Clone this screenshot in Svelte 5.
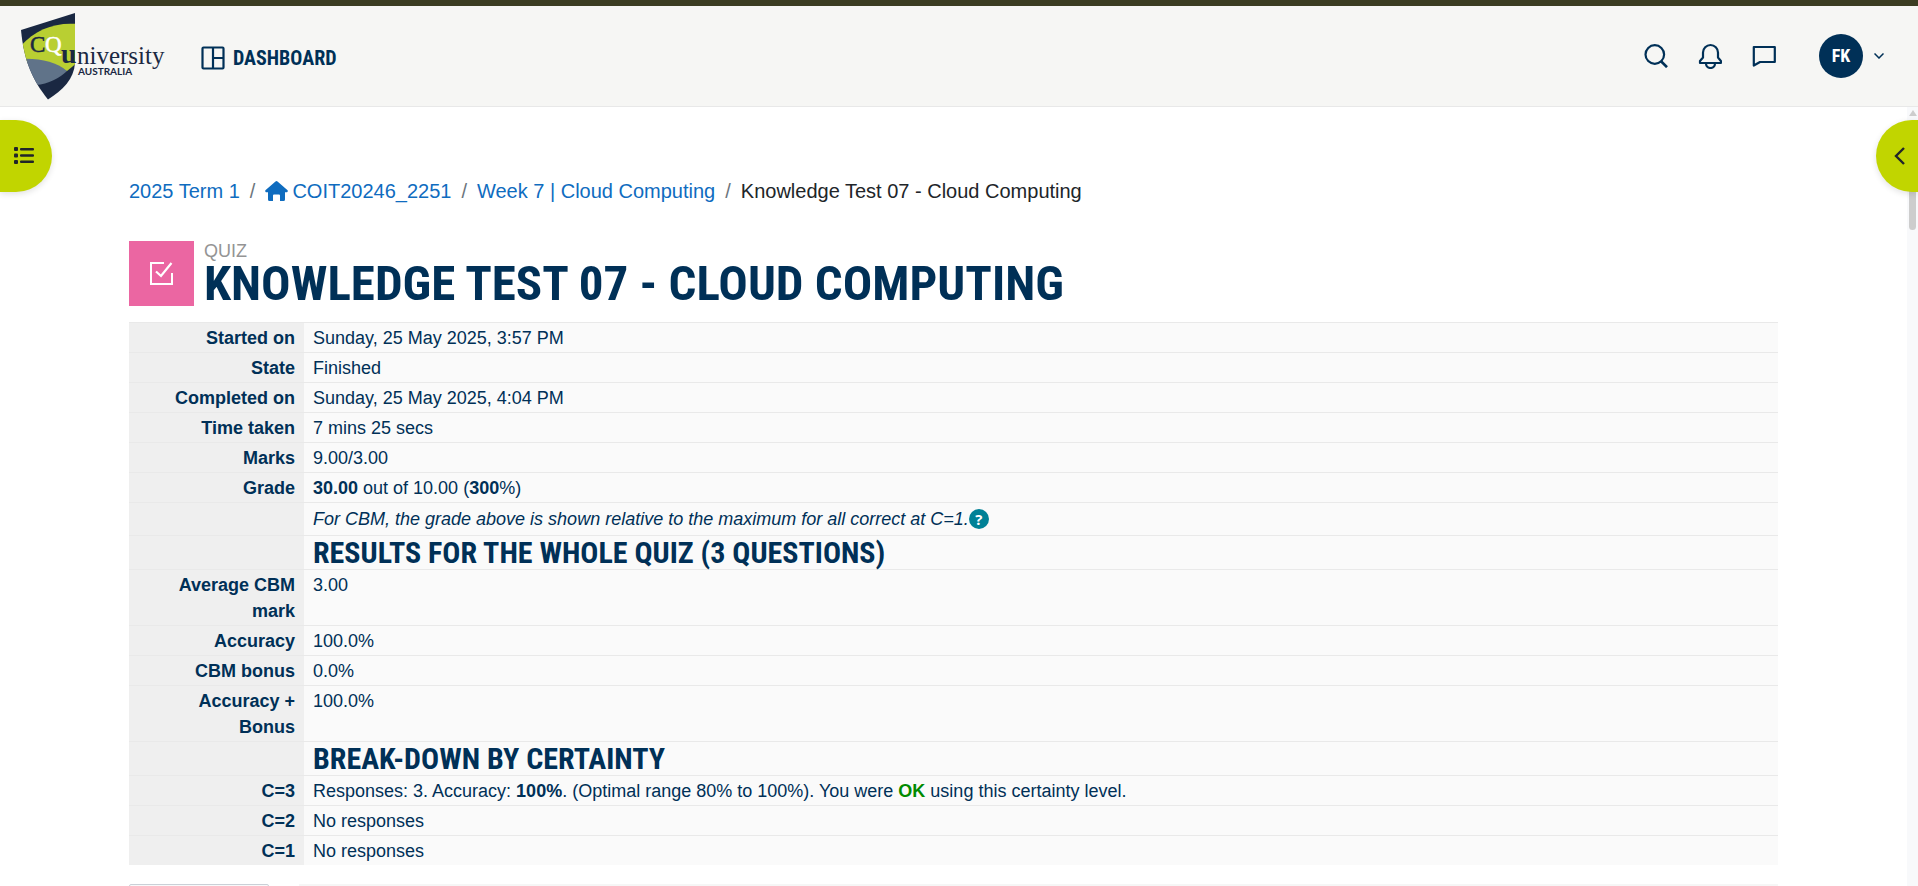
<script>
  const crumbs = [
    { label: '2025 Term 1' },
    { label: 'COIT20246_2251', home: true },
    { label: 'Week 7 | Cloud Computing' },
  ];

  const rows = [
    { label: 'Started on', parts: [{ t: 'Sunday, 25 May 2025, 3:57 PM' }] },
    { label: 'State', parts: [{ t: 'Finished' }] },
    { label: 'Completed on', parts: [{ t: 'Sunday, 25 May 2025, 4:04 PM' }] },
    { label: 'Time taken', parts: [{ t: '7 mins 25 secs' }] },
    { label: 'Marks', parts: [{ t: '9.00/3.00' }] },
    { label: 'Grade', parts: [{ t: '30.00', b: true }, { t: ' out of 10.00 (' }, { t: '300', b: true }, { t: '%)' }] },
    { label: '', note: 'For CBM, the grade above is shown relative to the maximum for all correct at C=1.' },
    { label: '', heading: 'Results for the whole quiz (3 questions)' },
    { label: 'Average CBM mark', parts: [{ t: '3.00' }] },
    { label: 'Accuracy', parts: [{ t: '100.0%' }] },
    { label: 'CBM bonus', parts: [{ t: '0.0%' }] },
    { label: 'Accuracy + Bonus', parts: [{ t: '100.0%' }] },
    { label: '', heading: 'Break-down by certainty' },
    {
      label: 'C=3',
      parts: [
        { t: 'Responses: 3. Accuracy: ' },
        { t: '100%', b: true },
        { t: '. (Optimal range 80% to 100%). You were ' },
        { t: 'OK', b: true, ok: true },
        { t: ' using this certainty level.' },
      ],
    },
    { label: 'C=2', parts: [{ t: 'No responses' }] },
    { label: 'C=1', parts: [{ t: 'No responses' }] },
  ];
</script>

<div class="shell">
  <header>
    <a class="logo" href="#home" aria-label="CQUniversity Australia">
      <svg width="146" height="90" viewBox="0 0 146 90">
        <defs>
          <clipPath id="shield"><path d="M1 19L55 2V52C54 68 43 79 28 88.500C14 71 4 52 1 19Z" /></clipPath>
        </defs>
        <g clip-path="url(#shield)">
          <rect width="60" height="90" fill="#1a2842" />
          <path d="M0 36C14 19 35 11 57 13V52L47 60L2 50Z" fill="#b9cf32" />
          <path d="M0 48C20 47 36 51 47 60C40 67 28 73 16 74L0 74Z" fill="#607389" />
        </g>
        <g font-family="Liberation Serif, serif">
          <text x="10" y="41" font-size="23" fill="#1a2842" stroke="#1a2842" stroke-width=".5">C</text>
          <text x="25" y="41" font-size="23" fill="#fff" stroke="#fff" stroke-width=".5">Q</text>
          <text x="41" y="52" font-size="28" fill="#1a2842" font-weight="bold">u</text>
          <text x="57" y="53" font-size="25" fill="#1a2842">niversity</text>
        </g>
        <text x="58" y="64" font-family="Lato, sans-serif" font-size="10" font-weight="bold" fill="#1a2842">AUSTRALIA</text>
      </svg>
    </a>

    <a class="dash" href="#dashboard">
      <svg width="24" height="24" viewBox="0 0 24 24" fill="none" stroke="currentColor" stroke-width="2.200">
        <rect x="1.500" y="1.500" width="21" height="21" rx="1" />
        <path d="M12 2V22M12 12H22" />
      </svg>
      <span>Dashboard</span>
    </a>

    <div class="tools">
      <button aria-label="Search">
        <svg width="24" height="24" viewBox="0 0 24 24" fill="none" stroke="currentColor" stroke-width="2.200">
          <circle cx="10.800" cy="10.500" r="9.300" /><path d="M16.800 17L23 23.200" stroke-width="2.600" />
        </svg>
      </button>
      <button aria-label="Notifications">
        <svg width="24" height="26" viewBox="0 0 24 26" fill="none" stroke="currentColor" stroke-width="2.200" stroke-linejoin="round">
          <path d="M2 20V18L5 14.500V9.500A7.500 7.500 0 0 1 20 9.500V14.500L22.900 18V20Z" />
          <path d="M8 20.500A4.500 4.500 0 0 0 17 20.500" />
        </svg>
      </button>
      <button aria-label="Messages">
        <svg width="24" height="24" viewBox="0 0 24 24" fill="none" stroke="currentColor" stroke-width="2.200" stroke-linejoin="round">
          <path d="M1.800 3H22.800V18H8L1.800 21.500Z" />
        </svg>
      </button>
      <button class="user" aria-label="User menu">
        <span class="avatar">FK</span>
        <svg width="10" height="6" viewBox="0 0 10 6" fill="none" stroke="currentColor" stroke-width="1.500"><path d="M.5 .5L5 5L9.500 .5" /></svg>
      </button>
    </div>
  </header>

  <div class="body">
    <main>
      <nav aria-label="Breadcrumb">
        <ol>
          {#each crumbs as c}
            <li>
              <a href="#crumb">
                {#if c.home}
                  <svg width="23" height="20" viewBox="0 0 23 20" fill="currentColor">
                    <path d="M10.500 .4Q11.500 -.4 12.500 .4L22.600 9.300Q23.200 10.500 22 11.200H20V18.500Q20 20 18.500 20H15V14.500Q15 13.500 14 13.500H9Q8 13.500 8 14.500V20H4.500Q3 20 3 18.500V11.200H1Q-.2 10.500 .4 9.300Z" />
                  </svg>
                {/if}{c.label}</a>
            </li>
          {/each}
          <li aria-current="page">Knowledge Test 07 - Cloud Computing</li>
        </ol>
      </nav>

      <div class="title">
        <span class="badge">
          <svg width="24" height="24" viewBox="0 0 24 24" fill="none" stroke="#fff" stroke-width="2">
            <path d="M15 2H2V23H23V12" /><path d="M7 10.500L12 15L22.500 2" stroke-width="2.200" />
          </svg>
        </span>
        <div>
          <div class="kind">Quiz</div>
          <h1>Knowledge Test 07 - Cloud Computing</h1>
        </div>
      </div>

      <table>
        <tbody>
          {#each rows as r}
            <tr class:note={r.note} class:head={r.heading}>
              <th scope="row">{r.label}</th>
              <td>
                {#if r.heading}
                  <h3>{r.heading}</h3>
                {:else if r.note}
                  <div class="note-line"><em>{r.note}</em><button class="help" aria-label="Help">?</button></div>
                {:else}
                  {#each r.parts as p}{#if p.b}<b class:ok={p.ok}>{p.t}</b>{:else}{p.t}{/if}{/each}
                {/if}
              </td>
            </tr>
          {/each}
        </tbody>
      </table>

      <div class="question">
        <div class="info"></div>
        <div class="content"></div>
      </div>
    </main>

    <div class="scroll" aria-hidden="true">
      <span class="up"></span>
      <span class="thumb"></span>
    </div>

    <button class="drawer left" aria-label="Open course index">
      <svg width="20" height="17" viewBox="0 0 20 17" fill="currentColor">
        <rect width="4" height="4" rx="1" /><rect y="6.500" width="4" height="4" rx="1" /><rect y="13" width="4" height="4" rx="1" />
        <rect x="6" y="1" width="14" height="2.400" rx="1" /><rect x="6" y="7.300" width="14" height="2.400" rx="1" /><rect x="6" y="13.600" width="14" height="2.400" rx="1" />
      </svg>
    </button>
    <button class="drawer right" aria-label="Open block drawer">
      <svg width="11" height="18" viewBox="0 0 11 18" fill="none" stroke="currentColor" stroke-width="2.400"><path d="M10 1L2 9L10 17" /></svg>
    </button>
  </div>
</div>

<style>
  :global(body) { margin: 0; background: #fff; }
  .shell {
    height: 100vh;
    display: flex;
    flex-direction: column;
    overflow: hidden;
    font-family: "Liberation Sans", Arial, sans-serif;
    font-size: 18px;
    line-height: 26px;
    color: #003057;
  }
  button { border: 0; padding: 0; background: none; color: inherit; font: inherit; cursor: pointer; }
  svg { display: block; }
  a { color: #0f6cbf; text-decoration: none; }

  header {
    flex: none;
    display: flex;
    align-items: center;
    height: 100px;
    padding: 0 34px 0 20px;
    background: #f6f6f4;
    border-top: 6px solid #3b3d22;
    border-bottom: 1px solid #e8e8e8;
  }
  .dash {
    display: flex;
    align-items: center;
    gap: 8px;
    margin-left: 35px;
    padding-top: 3px;
    color: #003057;
    font: 700 20px/24px "Roboto Condensed", "Liberation Sans Narrow", Roboto, sans-serif;
    text-transform: uppercase;
  }
  .tools { display: flex; align-items: center; gap: 30px; margin-left: auto; }
  .user { display: flex; align-items: center; gap: 11px; margin-left: 13px; }
  .avatar {
    display: grid;
    place-items: center;
    width: 44px;
    height: 44px;
    border-radius: 50%;
    background: #003057;
    color: #fff;
    font: 700 18px/24px "Roboto Condensed", "Liberation Sans Narrow", Roboto, sans-serif;
  }

  .body { position: relative; flex: 1; min-height: 0; display: flex; }
  main { flex: 1; min-width: 0; padding: 70px 129px 0; overflow: hidden; }

  ol { display: flex; margin: 0; padding: 0; list-style: none; font-size: 20px; line-height: 28px; }
  li { display: flex; color: #212529; }
  li a { display: flex; align-items: center; gap: 4px; }
  li + li::before { content: "/"; padding: 0 10px; color: #6c757d; }

  .title { display: flex; gap: 10px; margin-top: 36px; height: 65px; }
  .badge { box-sizing: border-box; display: grid; place-items: center; width: 65px; height: 65px; padding: 0 2px 2px 0; background: #eb66a2; }
  .kind { color: #949494; font-size: 18px; line-height: 20px; text-transform: uppercase; }
  h1, h3 {
    margin: 0;
    font-family: "Roboto Condensed", "Liberation Sans Narrow", Roboto, sans-serif;
    font-weight: 700;
    text-transform: uppercase;
  }
  h1 { font-size: 49px; line-height: 46px; white-space: nowrap; }
  h3 { font-size: 30px; line-height: 33px; }

  table { width: 100%; margin-top: 16px; border-collapse: separate; border-spacing: 0; background: #fafafa; }
  th, td { padding: 2px 9px 1px; border-top: 1px solid #e9e9e9; vertical-align: top; }
  th { width: 157px; background: #efefef; text-align: right; font-weight: 700; }
  td { text-align: left; }
  .head th, .head td, .note th, .note td { padding-top: 0; padding-bottom: 0; }
  .note-line { display: flex; align-items: center; height: 32px; }
  .help {
    display: grid;
    place-items: center;
    width: 20px;
    height: 20px;
    border-radius: 50%;
    background: #008196;
    color: #fff;
    font: 700 15px/20px "Open Sans", sans-serif;
  }
  .ok { color: #008a00; }

  .question { display: flex; gap: 30px; margin-top: 19px; }
  .info { box-sizing: border-box; width: 140px; height: 120px; border: 1px solid #cad0d7; border-radius: 2px; background: #f8f9fa; }
  .content { flex: 1; background: #f6f6f6; }

  .scroll { display: flex; flex-direction: column; align-items: center; width: 11px; padding-top: 3px; box-sizing: border-box; background: #f8f9fb; }
  .up { border: 4px solid transparent; border-top: 0; border-bottom: 6px solid #cdcdcd; }
  .thumb { width: 7px; height: 106px; margin-top: 8px; border-radius: 4px; background: #cdcdcd; }

  .drawer {
    position: absolute;
    top: 13px;
    display: flex;
    align-items: center;
    box-sizing: border-box;
    height: 72px;
    padding-bottom: 1px;
    background: #c1d500;
    color: #212529;
    box-shadow: 0 2px 6px rgba(0, 0, 0, 0.12);
  }
  .left { left: 0; width: 52px; padding-left: 14px; border-radius: 0 36px 36px 0; }
  .right { right: 0; width: 42px; padding-left: 18px; border-radius: 36px 0 0 36px; }
</style>
